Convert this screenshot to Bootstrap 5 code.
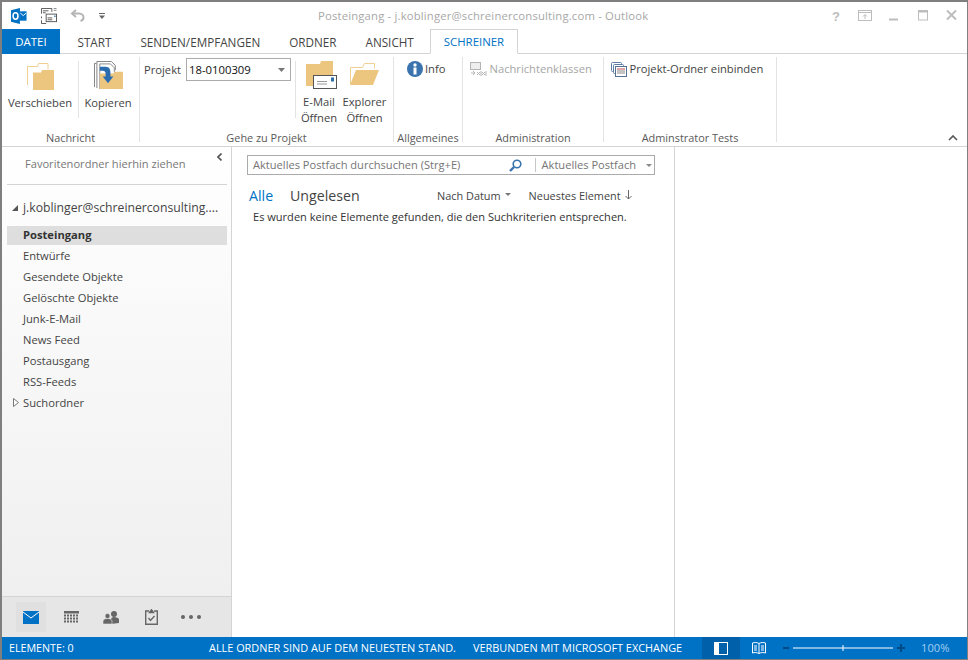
<!DOCTYPE html>
<html lang="de">
<head>
<meta charset="utf-8">
<title>Posteingang - Outlook</title>
<link href="https://cdn.jsdelivr.net/npm/bootstrap@5.3.0/dist/css/bootstrap.min.css" rel="stylesheet">
<style>
html,body{margin:0;height:660px;width:968px;overflow:hidden;background:#fff}
body{font-family:"Open Sans","Noto Sans",sans-serif;font-size:11.2px;color:#444;line-height:16px}
.win{width:968px;height:660px;border:1px solid #7f7f7f;border-top:2px solid #7f7f7f;border-left-width:2px;display:flex;flex-direction:column}
.ttl{height:27px;flex:none;display:flex;align-items:center;position:relative}
.qat{width:316px;padding-left:9px;gap:13.5px}
.ttxt{color:#a8a8a8;font-size:11.3px;letter-spacing:.17px;width:514px;margin-top:1px;white-space:nowrap}
.tabsrow{height:25px;flex:none;border-bottom:1px solid #d4d4d4;display:flex;align-items:stretch}
.tabi{padding:1px 14.5px 0;display:flex;align-items:center;color:#444;font-size:11.7px;white-space:nowrap}
.tabf{background:#0072c6;color:#fff;width:58px;padding:1px 0 0;justify-content:center;margin-bottom:-1px;margin-right:3px;font-size:11.4px}
.taba{color:#0072c6;border:1px solid #d4d4d4;border-bottom:1px solid #fff;margin-bottom:-1px;padding:0 13px;margin-left:1.5px;font-size:11.4px}
.rib{height:93px;flex:none;border-bottom:1px solid #d4d4d4;display:flex;position:relative}
.grp{display:flex;flex-direction:column;border-right:1px solid #e3e3e3;margin:3px 0 4px;flex:none}
.gbody{flex:1;display:flex;min-height:0}
.glab{height:16px;padding-top:5px;text-align:center;color:#595959;font-size:10.9px;line-height:14px;white-space:nowrap}
.g1{width:138px}.g2{width:254px}.g3{width:69px}.g4{width:141px}.g5{width:173px}
.big{display:flex;flex-direction:column;align-items:center;text-align:center;white-space:nowrap;line-height:16px;color:#444;padding-top:3px}
.ibox{height:30px;display:flex;align-items:flex-end;justify-content:center;margin-bottom:5px}
.vs{width:1px;background:#e3e3e3;margin:4px 0 8px}
.cmb{width:105px;height:23px;border:1px solid #ababab;display:flex;align-items:center;justify-content:space-between;padding:0 5px 0 2px;color:#111;font-size:11.3px;margin-left:5px}
.smallb{display:flex;align-items:center;height:23px;white-space:nowrap;padding-top:1px}
.dis{color:#a6a6a6}
.mainw{flex:1;display:flex;min-height:0}
.nav1{width:230px;flex:none;border-right:1px solid #d4d4d4;display:flex;flex-direction:column;background:linear-gradient(#fff,#eee)}
.favs{height:38px;margin:0 4px 0 5px;border-bottom:1px solid #d4d4d4;color:#777;font-size:11.1px;padding:9px 0 0 18px;position:relative;flex:none}
.coll{position:absolute;right:5px;top:6px}
.acct{height:28px;margin-top:9px;padding-left:10px;display:flex;align-items:center;gap:4px;color:#444;font-size:12.2px;white-space:nowrap;overflow:hidden}
.flist{margin:4px 4px 0 5px;flex:1}
.fit{height:21px;line-height:20px;padding-left:16px;position:relative;color:#444}
.fsel{background:#dedede;font-weight:700;color:#333;height:19px;line-height:18px;margin-bottom:1px}
.exp{position:absolute;left:6px;top:5px}
.switch{height:41px;flex:none;background:#e6e6e6;border-top:1px solid #d4d4d4;display:flex;align-items:center;padding-left:14px}
.swi{width:30px;height:30px;display:flex;align-items:center;justify-content:center;margin-right:10px}
.swa{background:#e0e0e0}
.lst{width:443px;flex:none;border-right:1px solid #d4d4d4;padding:8px 0 0 15px}
.srch{width:408px;height:20px;border:1px solid #ababab;display:flex;align-items:center;color:#757575;font-size:11.1px;padding:0 2px 0 5px}
.scope{margin-left:auto;display:flex;align-items:center}
.sepv{width:1px;height:14px;background:#c6c6c6;margin:0 6px 0 13px}
.drop2{margin-left:10px}
.fltr{height:24px;margin-top:9px;display:flex;align-items:center;white-space:nowrap;font-size:10.9px}
.fa{color:#0072c6;font-size:14.2px;margin-left:2px;width:41px}
.fu{font-size:14.2px;color:#444;width:147px}
.srtd{margin:0 18px 4px 4px}
.srta{margin:0 0 3px 4px}
.emp{padding-left:6px;color:#333;margin-top:1px;font-size:11.05px;white-space:nowrap}
.stat{height:22px;flex:none;background:#0072c6;color:#fff;display:flex;align-items:center;font-size:10.9px;white-space:nowrap}
.vbn{height:22px;width:38px;display:flex;align-items:center;justify-content:center}
.vba{background:#0061aa}
.stl1{width:207px;padding-left:7px;font-size:10.7px}
.stl2{width:264px}
.stl3{width:229px}
.zoomp{margin-left:5px}
.pct{margin-left:14px;color:#a3cdf0;font-size:11.2px}
.colr{position:absolute;right:9px;bottom:5px}
.mlc{margin-left:5px}
.mbe{margin-bottom:4px}
.w58{width:58px}.w76{width:76px}.w46{width:46px}.w45{width:45px}
.prj{width:155px;padding:1px 0 0 4px}
.pad13{padding-left:13px;gap:2px}
.pad7{padding-left:7px;gap:2.500px}
</style>
</head>
<body>
<div class="win">
  <div class="ttl">
    <div class="qat d-flex align-items-center">
      <svg width="16" height="16" viewBox="0 0 17 17"><path d="M0 2.500 9.500 0v17L0 14.500z" fill="#0072c6"/><rect x="9.500" y="3.500" width="7" height="10" fill="#0072c6"/><path d="M10 5.500l3 2.500 3-2.500" fill="none" stroke="#fff"/><ellipse cx="4.800" cy="8.500" rx="2.600" ry="3.400" fill="none" stroke="#fff" stroke-width="1.600"/></svg>
      <svg width="16" height="16" viewBox="0 0 17 17" fill="none" stroke="#555"><path d="M.5 6V.5h11V4M.5 9v2M.5 13v3.500h5M2 3h6M2 5h3"/><rect x="5.500" y="6.500" width="11" height="8" fill="#fff"/><path d="M7 10.500h5M7 12.500h5"/><rect x="14" y="8" width="1.500" height="1.500" fill="#2f6fa8" stroke="none"/><path d="M13.500 .5h3M13.500 2.500h3" stroke="#888"/></svg>
      <svg width="15" height="13" viewBox="0 0 15 13" fill="none" stroke="#b5b5b5" stroke-width="2"><path d="M6 1 2 4.500l4 3.500"/><path d="M2 4.500h7c3 0 4.500 2 4.500 4s-1 3-3 3.500"/></svg>
      <svg width="7" height="8" viewBox="0 0 7 8"><path d="M0 1.500h6" stroke="#666"/><path d="M0 3.500h6L3 7z" fill="#666"/></svg>
    </div>
    <div class="ttxt">Posteingang - j.koblinger@schreinerconsulting.com - Outlook</div>
    <svg width="130" height="14" viewBox="0 0 130 14" fill="none" stroke="#bdbdbd"><text x="0" y="12" font-family="Liberation Sans" font-size="13" font-weight="700" fill="#bdbdbd" stroke="none">?</text><rect x="26.500" y="1.500" width="13" height="10"/><path d="M26.500 3.500h13M33 10V6M31 7.500l2-2 2 2"/><path d="M57 10.500h9" stroke-width="2"/><rect x="86.500" y="1.500" width="9" height="9.500"/><path d="M86.500 2.500h9" stroke-width="2"/><path d="M115 1.500l9 9M124 1.500l-9 9" stroke-width="2"/></svg>
  </div>
  <div class="tabsrow">
    <div class="tabi tabf">DATEI</div>
    <div class="tabi">START</div>
    <div class="tabi">SENDEN/EMPFANGEN</div>
    <div class="tabi">ORDNER</div>
    <div class="tabi">ANSICHT</div>
    <div class="tabi taba">SCHREINER</div>
  </div>
  <div class="rib">
    <div class="grp g1">
      <div class="gbody">
        <div class="big w76"><div class="ibox"><svg width="27" height="27" viewBox="0 0 27 27"><path d="M.5 22V3.500h10l1-3h9.500v6" fill="none" stroke="#f0cf95"/><path d="M6 9.500h8l1-2.500h12v20H6z" fill="#ecc67f"/></svg></div>Verschieben</div>
        <div class="vs"></div>
        <div class="big w58"><div class="ibox"><svg width="29" height="29" viewBox="0 0 30 30"><path d="M.5 27V2.500h2M3 28V.5h15l4 4v5" fill="none" stroke="#7f7f7f"/><path d="M6 29V3h11l4 4v5" fill="#fff" stroke="#8a8a8a"/><path d="M6 13v16h24V11h-8l-2 2z" fill="#ecc67f"/><path d="M6 6h6c4 0 5 3 5 6v4h3l-5.500 7L9 16h3v-3c0-2-1-3-3-3H6z" fill="#2b6cb0"/></svg></div>Kopieren</div>
      </div>
      <div class="glab">Nachricht</div>
    </div>
    <div class="grp g2">
      <div class="gbody">
        <div class="d-flex prj"><div class="smallb">Projekt</div><div class="cmb">18-0100309<svg width="7" height="4" viewBox="0 0 7 4"><path d="M0 0h7L3.500 4z" fill="#777"/></svg></div></div>
        <div class="vs"></div>
        <div class="big w46"><div class="ibox"><svg class="mlc" width="31" height="28" viewBox="0 0 31 28"><path d="M0 3h14l1-3h12v25H0z" fill="#ecc67f"/><rect x="7.500" y="14.500" width="23" height="13" fill="#fff" stroke="#555"/><path d="M11 20.500h10M11 23h10" stroke="#999"/><rect x="25" y="16.500" width="3" height="4" fill="#2f6fa8"/></svg></div>E-Mail<br>Öffnen</div>
        <div class="big w45"><div class="ibox"><svg class="mbe" width="29" height="22" viewBox="0 0 29 22"><path d="M.5 21V4.500h12l2-4h10v5" fill="none" stroke="#f0cf95"/><path d="M6 7h23l-6 15H0z" fill="#ecc67f"/></svg></div>Explorer<br>Öffnen</div>
      </div>
      <div class="glab">Gehe zu Projekt</div>
    </div>
    <div class="grp g3">
      <div class="gbody"><div class="smallb pad13"><svg width="16" height="16" viewBox="0 0 16 16"><circle cx="8" cy="8" r="8" fill="#3a73ad"/><rect x="6.500" y="6.500" width="3" height="7" fill="#fff"/><circle cx="8" cy="4" r="1.700" fill="#fff"/></svg>Info</div></div>
      <div class="glab">Allgemeines</div>
    </div>
    <div class="grp g4">
      <div class="gbody"><div class="smallb dis pad7"><svg width="17" height="15" viewBox="0 0 17 15" fill="none" stroke="#b5b5b5"><rect x=".5" y=".5" width="10" height="7" fill="#eee"/><path d="M1 11h4M3 9l2 2-2 2M7 10l3 3M10 10l-3 3M11 9v5M16 9v5M12 10l3 3M15 10l-3 3"/></svg>Nachrichtenklassen</div></div>
      <div class="glab">Administration</div>
    </div>
    <div class="grp g5">
      <div class="gbody"><div class="smallb pad7"><svg width="16" height="15" viewBox="0 0 16 15" fill="none" stroke="#5d7ea6"><rect x=".5" y=".5" width="10" height="9" rx="1"/><rect x="2.500" y="2.500" width="10" height="9" fill="#fff" rx="1"/><rect x="4.500" y="4.500" width="11" height="10" fill="#fff" stroke="#56708f"/><path d="M6 7h8" stroke="#c0504d"/><path d="M6 9h8M6 11h8" stroke="#888"/></svg>Projekt-Ordner einbinden</div></div>
      <div class="glab">Adminstrator Tests</div>
    </div>
    <svg class="colr" width="10" height="6" viewBox="0 0 10 6" fill="none" stroke="#555" stroke-width="1.600"><path d="M1 5l4-4 4 4"/></svg>
  </div>
  <div class="mainw">
    <div class="nav1">
      <div class="favs">Favoritenordner hierhin ziehen<svg class="coll" width="5" height="8" viewBox="0 0 5 8" fill="none" stroke="#555" stroke-width="1.600"><path d="M4.500 .5 1 4l3.500 3.500"/></svg></div>
      <div class="acct"><svg class="flex-none" width="7" height="7" viewBox="0 0 7 7"><path d="M6 0v6H0z" fill="#555"/></svg>j.koblinger@schreinerconsulting....</div>
      <div class="flist">
        <div class="fit fsel">Posteingang</div>
        <div class="fit">Entwürfe</div>
        <div class="fit">Gesendete Objekte</div>
        <div class="fit">Gelöschte Objekte</div>
        <div class="fit">Junk-E-Mail</div>
        <div class="fit">News Feed</div>
        <div class="fit">Postausgang</div>
        <div class="fit">RSS-Feeds</div>
        <div class="fit"><svg class="exp" width="6" height="9" viewBox="0 0 6 9"><path d="M.5.500 5.500 4.500.5 8.500z" fill="#fff" stroke="#777"/></svg>Suchordner</div>
      </div>
      <div class="switch">
        <div class="swi swa"><svg width="16" height="13" viewBox="0 0 16 13"><rect width="16" height="13" fill="#0072c6"/><path d="M0 1l8 6 8-6" fill="none" stroke="#fff"/></svg></div>
        <div class="swi"><svg width="15" height="12" viewBox="0 0 15 12"><rect width="15" height="2.500" fill="#666"/><path d="M0 4.500h15M0 7.500h15M0 10.500h15" stroke="#666" stroke-dasharray="2 1" stroke-width="2"/></svg></div>
        <div class="swi"><svg width="16" height="13" viewBox="0 0 16 13" fill="#666"><circle cx="11" cy="3" r="3"/><path d="M8 13V8.500c0-1.500 1-2.500 3-2.500s5 1 5 2.500V12z"/><circle cx="4.500" cy="5" r="2.500" stroke="#e6e6e6" stroke-width=".6"/><path d="M0 13v-3c0-1.500 2-2.500 4.500-2.500S9 8.500 9 10v3z" stroke="#e6e6e6" stroke-width=".6"/></svg></div>
        <div class="swi"><svg width="13" height="16" viewBox="0 0 13 16" fill="none" stroke="#666" stroke-width="1.400"><path d="M4 2H.7v13.300h11.600V2H9"/><path d="M4.500 3.500 6.500 .8l2 2.700z" fill="#666"/><path d="M3.500 9l2 2.500 4-4.500"/></svg></div>
        <div class="swi"><svg width="20" height="4" viewBox="0 0 20 4" fill="#666"><circle cx="2" cy="2" r="2"/><circle cx="10" cy="2" r="2"/><circle cx="18" cy="2" r="2"/></svg></div>
      </div>
    </div>
    <div class="lst">
      <div class="srch">Aktuelles Postfach durchsuchen (Strg+E)
        <div class="scope"><svg width="13" height="13" viewBox="0 0 13 13" fill="none"><circle cx="8" cy="5" r="3.800" stroke="#3a73ad" stroke-width="1.600"/><path d="M5 8l-4 4" stroke="#3a73ad" stroke-width="2.400"/></svg><span class="sepv"></span><span>Aktuelles Postfach</span><svg class="drop2" width="6" height="3" viewBox="0 0 6 3"><path d="M0 0h6L3 3z" fill="#888"/></svg></div>
      </div>
      <div class="fltr"><span class="fa">Alle</span><span class="fu">Ungelesen</span><span>Nach Datum</span><svg class="srtd" width="6" height="3" viewBox="0 0 6 3"><path d="M0 0h6L3 3z" fill="#777"/></svg><span>Neuestes Element</span><svg class="srta" width="7" height="10" viewBox="0 0 7 10" fill="none" stroke="#666"><path d="M3.500 0v9M.5 6l3 3 3-3"/></svg></div>
      <div class="emp">Es wurden keine Elemente gefunden, die den Suchkriterien entsprechen.</div>
    </div>
    <div class="flex-fill"></div>
  </div>
  <div class="stat">
    <span class="stl1">ELEMENTE: 0</span>
    <span class="stl2">ALLE ORDNER SIND AUF DEM NEUESTEN STAND.</span>
    <span class="stl3">VERBUNDEN MIT MICROSOFT EXCHANGE</span>
    <div class="vbn vba"><svg width="14" height="13" viewBox="0 0 14 13"><rect x=".5" y=".5" width="13" height="12" fill="none" stroke="#fff"/><rect width="5" height="13" fill="#fff"/></svg></div>
    <div class="vbn"><svg width="14" height="13" viewBox="0 0 14 13" fill="none" stroke="#fff"><path d="M.5 1c2-.7 4.500-.7 6.500.5 2-1.200 4.500-1.200 6.500-.5v10c-2-.7-4.500-.7-6.500.5-2-1.200-4.500-1.200-6.500-.5zM7 1.500v10M2 4h3M2 6h3M2 8h3M9 4h3M9 6h3M9 8h3"/></svg></div>
    <svg class="zoomp" width="124" height="10" viewBox="0 0 124 10"><path d="M0 5h6M114 5h8M118 1v8" stroke="#004b84" stroke-width="2"/><path d="M10 5h100M60 2v6" stroke="#fff"/></svg>
    <span class="pct">100%</span>
  </div>
</div>
</body>
</html>
